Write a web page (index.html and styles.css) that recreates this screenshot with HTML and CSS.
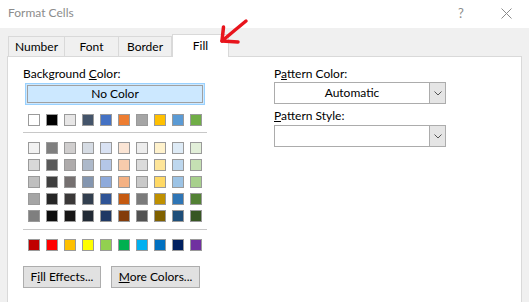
FILE: index.html
```html
<!DOCTYPE html>
<html lang="en">

<head>
    <meta charset="UTF-8">
    <title>Format Cells</title>
    <link rel="stylesheet" href="styles.css">
</head>

<body>
    <div class="window">
        <div class="titlebar">
            <span class="title">Format Cells</span>
            <span class="help">?</span>
            <span class="close">
                <svg width="11" height="11" viewBox="0 0 11 11">
                    <path d="M0.5 0.5 L10.5 10.5 M10.5 0.5 L0.5 10.5" stroke="#8a8a8a" stroke-width="1" fill="none"/>
                </svg>
            </span>
        </div>

        <div class="dialog">
            <div class="tabs">
                <div class="tab tab-number">Number</div>
                <div class="tab tab-font">Font</div>
                <div class="tab tab-border">Border</div>
                <div class="tab tab-fill active">Fill</div>
            </div>

            <div class="panel">
                <div class="col-left">
                    <div class="label">Background <u>C</u>olor:</div>
                    <div class="nocolor"><div class="nocolor-inner">No Color</div></div>

                    <!-- theme colors -->
                    <div class="swatch-row first-row">
                        <span class="swatch" style="background:#ffffff"></span>
                        <span class="swatch" style="background:#000000"></span>
                        <span class="swatch" style="background:#e7e6e6"></span>
                        <span class="swatch" style="background:#44546a"></span>
                        <span class="swatch" style="background:#4472c4"></span>
                        <span class="swatch" style="background:#ed7d31"></span>
                        <span class="swatch" style="background:#a5a5a5"></span>
                        <span class="swatch" style="background:#ffc000"></span>
                        <span class="swatch" style="background:#5b9bd5"></span>
                        <span class="swatch" style="background:#70ad47"></span>
                    </div>
                    <div class="sep"></div>

                    <!-- tints and shades -->
                    <div class="swatch-grid">
                        <div class="swatch-row">
                            <span class="swatch" style="background:#f2f2f2"></span>
                            <span class="swatch" style="background:#7f7f7f"></span>
                            <span class="swatch" style="background:#d0cece"></span>
                            <span class="swatch" style="background:#d6dce4"></span>
                            <span class="swatch" style="background:#d9e2f3"></span>
                            <span class="swatch" style="background:#fbe5d5"></span>
                            <span class="swatch" style="background:#ededed"></span>
                            <span class="swatch" style="background:#fff2cc"></span>
                            <span class="swatch" style="background:#deebf6"></span>
                            <span class="swatch" style="background:#e2efd9"></span>
                        </div>
                        <div class="swatch-row">
                            <span class="swatch" style="background:#d8d8d8"></span>
                            <span class="swatch" style="background:#595959"></span>
                            <span class="swatch" style="background:#aeabab"></span>
                            <span class="swatch" style="background:#adb9ca"></span>
                            <span class="swatch" style="background:#b4c6e7"></span>
                            <span class="swatch" style="background:#f7cbac"></span>
                            <span class="swatch" style="background:#dbdbdb"></span>
                            <span class="swatch" style="background:#fee599"></span>
                            <span class="swatch" style="background:#bdd7ee"></span>
                            <span class="swatch" style="background:#c5e0b3"></span>
                        </div>
                        <div class="swatch-row">
                            <span class="swatch" style="background:#bfbfbf"></span>
                            <span class="swatch" style="background:#3f3f3f"></span>
                            <span class="swatch" style="background:#757070"></span>
                            <span class="swatch" style="background:#8496b0"></span>
                            <span class="swatch" style="background:#8eaadb"></span>
                            <span class="swatch" style="background:#f4b183"></span>
                            <span class="swatch" style="background:#c9c9c9"></span>
                            <span class="swatch" style="background:#ffd965"></span>
                            <span class="swatch" style="background:#9cc3e5"></span>
                            <span class="swatch" style="background:#a8d08d"></span>
                        </div>
                        <div class="swatch-row">
                            <span class="swatch" style="background:#a5a5a5"></span>
                            <span class="swatch" style="background:#262626"></span>
                            <span class="swatch" style="background:#3a3838"></span>
                            <span class="swatch" style="background:#323f4f"></span>
                            <span class="swatch" style="background:#2f5496"></span>
                            <span class="swatch" style="background:#c55a11"></span>
                            <span class="swatch" style="background:#7b7b7b"></span>
                            <span class="swatch" style="background:#bf9000"></span>
                            <span class="swatch" style="background:#2e75b5"></span>
                            <span class="swatch" style="background:#538135"></span>
                        </div>
                        <div class="swatch-row">
                            <span class="swatch" style="background:#7f7f7f"></span>
                            <span class="swatch" style="background:#0c0c0c"></span>
                            <span class="swatch" style="background:#171616"></span>
                            <span class="swatch" style="background:#222a35"></span>
                            <span class="swatch" style="background:#1f3864"></span>
                            <span class="swatch" style="background:#833c0b"></span>
                            <span class="swatch" style="background:#525252"></span>
                            <span class="swatch" style="background:#7f6000"></span>
                            <span class="swatch" style="background:#1e4e79"></span>
                            <span class="swatch" style="background:#375623"></span>
                        </div>
                    </div>
                    <div class="sep sep-bottom"></div>

                    <!-- standard colors -->
                    <div class="swatch-row standard-row">
                        <span class="swatch" style="background:#c00000"></span>
                        <span class="swatch" style="background:#ff0000"></span>
                        <span class="swatch" style="background:#ffc000"></span>
                        <span class="swatch" style="background:#ffff00"></span>
                        <span class="swatch" style="background:#92d050"></span>
                        <span class="swatch" style="background:#00b050"></span>
                        <span class="swatch" style="background:#00b0f0"></span>
                        <span class="swatch" style="background:#0070c0"></span>
                        <span class="swatch" style="background:#002060"></span>
                        <span class="swatch" style="background:#7030a0"></span>
                    </div>

                    <div class="buttons">
                        <div class="btn btn-effects">F<u>i</u>ll Effects...</div>
                        <div class="btn btn-more"><u>M</u>ore Colors...</div>
                    </div>
                </div>

                <div class="col-right">
                    <div class="label">P<u>a</u>ttern Color:</div>
                    <div class="combo">
                        <span class="combo-value">Automatic</span>
                        <span class="combo-btn">
                            <svg width="8" height="5" viewBox="0 0 8 5">
                                <path d="M0.5 0.5 L4 4 L7.5 0.5" stroke="#555" stroke-width="1" fill="none"/>
                            </svg>
                        </span>
                    </div>
                    <div class="label label-style"><u>P</u>attern Style:</div>
                    <div class="combo combo-style">
                        <span class="combo-value"></span>
                        <span class="combo-btn">
                            <svg width="8" height="5" viewBox="0 0 8 5">
                                <path d="M0.5 0.5 L4 4 L7.5 0.5" stroke="#555" stroke-width="1" fill="none"/>
                            </svg>
                        </span>
                    </div>
                </div>
            </div>
        </div>

        <!-- red arrow pointing at the Fill tab -->
        <svg class="annotation" width="529" height="60" viewBox="0 0 529 60">
            <path d="M246 21 Q235 30 222 41" stroke="#e8141c" stroke-width="3.5" fill="none" stroke-linecap="round"/>
            <path d="M223.5 27 L222 41 L238 42" stroke="#e8141c" stroke-width="3.5" fill="none" stroke-linecap="round" stroke-linejoin="round"/>
        </svg>
    </div>
</body>

</html>
```

FILE: styles.css
```css
html, body {
    margin: 0;
    padding: 0;
}

body {
    font-family: Lato, "Noto Sans", sans-serif;
    font-size: 12px;
    color: #000;
    background: #f0f0f0;
}

.window {
    position: relative;
    width: 529px;
    height: 302px;
    overflow: hidden;
    background: #f0f0f0;
}

.titlebar {
    display: flex;
    align-items: center;
    height: 28px;
    background: #fff;
    padding-left: 8px;
    color: #8c8c8c;
}

.title {
    flex: 1;
    line-height: 15px;
    margin-top: -3px;
}

.help {
    width: 10px;
    margin-right: 33px;
    margin-top: -3px;
    font-size: 13px;
}

.close {
    display: flex;
    width: 11px;
    margin-right: 17px;
    margin-top: -2px;
}

.dialog {
    padding: 7px 7px 0 7px;
}

.tabs {
    display: flex;
    align-items: flex-end;
    height: 21px;
    padding-left: 1px;
}

.tab {
    box-sizing: border-box;
    height: 20px;
    border: 1px solid #d9d9d9;
    border-bottom: none;
    margin-right: -1px;
    text-align: center;
    line-height: 19px;
    background: #f0f0f0;
}

.tab-number { width: 57px; }
.tab-font { width: 55px; }
.tab-border { width: 54px; }

.tab-fill {
    width: 57px;
}

.tab.active {
    position: relative;
    z-index: 1;
    height: 23px;
    margin-bottom: -1px;
    margin-left: 1px;
    background: #fff;
    line-height: 22px;
}

.panel {
    display: flex;
    gap: 67px;
    height: 260px;
    background: #fff;
    border: 1px solid #d9d9d9;
    padding: 9px 0 0 15px;
}

.label {
    line-height: 15px;
}

.col-left {
    width: 184px;
}

.nocolor {
    box-sizing: border-box;
    height: 22px;
    margin: 2px 2px 0 2px;
    padding: 1px;
    border: 1px solid #99d1ff;
    background: #cce8ff;
}

.nocolor-inner {
    box-sizing: border-box;
    height: 18px;
    border: 1px solid #a0a0a0;
    text-align: center;
    line-height: 16px;
}

.swatch-row {
    display: flex;
    gap: 6px;
    padding-left: 5px;
    height: 12px;
}

.first-row {
    margin-top: 9px;
}

.swatch {
    box-sizing: border-box;
    width: 12px;
    height: 12px;
    border: 1px solid #9a9a9a;
}

.sep {
    height: 1px;
    background: #c8c8c8;
    margin-top: 6px;
}

.swatch-grid {
    display: flex;
    flex-direction: column;
    gap: 5px;
    margin-top: 9px;
}

.sep-bottom {
    margin-top: 7px;
}

.standard-row {
    margin-top: 9px;
}

.buttons {
    display: flex;
    gap: 10px;
    margin-top: 15px;
}

.btn {
    box-sizing: border-box;
    height: 22px;
    border: 1px solid #adadad;
    background: #e1e1e1;
    text-align: center;
    line-height: 20px;
}

.btn-effects { width: 78px; }
.btn-more { width: 89px; }

.col-right {
    width: 172px;
}

.combo {
    box-sizing: border-box;
    display: flex;
    height: 22px;
    margin-top: 1px;
    border: 1px solid #acacac;
    background: #fff;
}

.combo-value {
    flex: 1;
    text-align: center;
    line-height: 20px;
}

.combo-btn {
    box-sizing: border-box;
    display: flex;
    align-items: center;
    justify-content: center;
    width: 16px;
    border-left: 1px solid #acacac;
    background: #e5e5e5;
}

.label-style {
    margin-top: 4px;
}

.combo-style {
    margin-top: 2px;
}

.annotation {
    position: absolute;
    left: 0;
    top: 0;
    z-index: 2;
    pointer-events: none;
}
```
